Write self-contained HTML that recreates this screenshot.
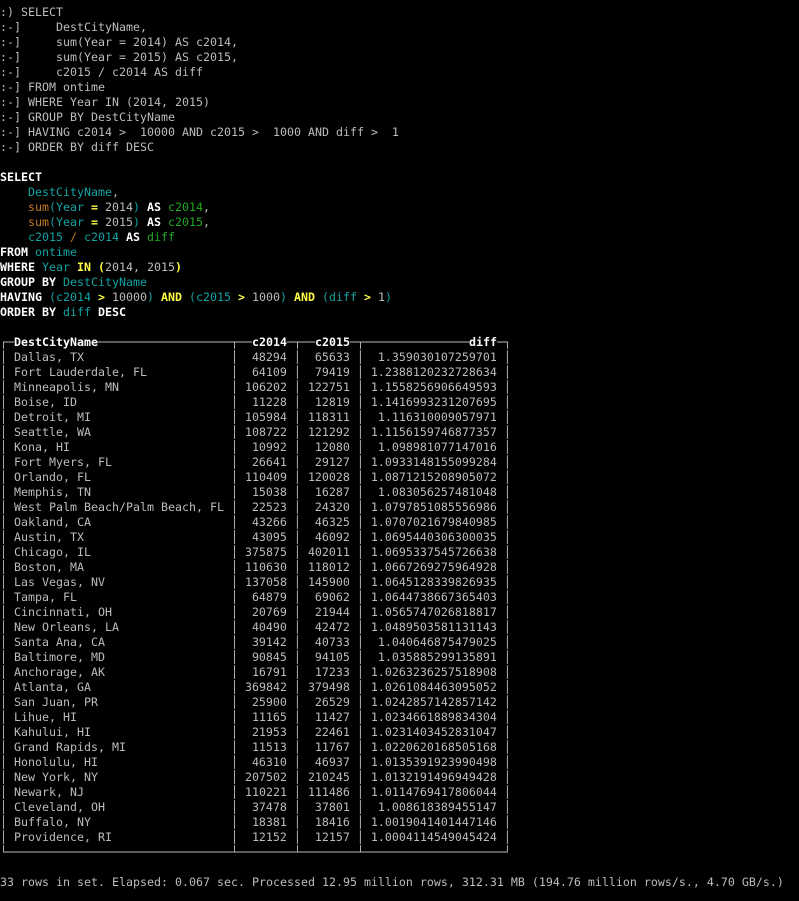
<!DOCTYPE html>
<html><head><meta charset="utf-8"><style>
html,body{margin:0;padding:0;background:#000;width:799px;height:901px;overflow:hidden}
pre{margin:0;padding:5px 0 0 0;font-family:"DejaVu Sans Mono","Liberation Mono",monospace;font-size:11.63px;line-height:15px;color:#bcbcbc;white-space:pre}
b{color:#fff;font-weight:bold}
.c{color:#13a3a3}.o{color:#c27a26}.g{color:#22a822}.y{color:#ffff44;font-weight:bold}
.n{display:inline-block;width:30ch}
.a{display:inline-block;width:6ch;text-align:right}
.d{display:inline-block;width:18ch;text-align:right}
</style></head><body><pre>:) SELECT
:-]     DestCityName,
:-]     sum(Year = 2014) AS c2014,
:-]     sum(Year = 2015) AS c2015,
:-]     c2015 / c2014 AS diff
:-] FROM ontime
:-] WHERE Year IN (2014, 2015)
:-] GROUP BY DestCityName
:-] HAVING c2014 &gt;  10000 AND c2015 &gt;  1000 AND diff &gt;  1
:-] ORDER BY diff DESC

<b>SELECT</b>
    <span class="c">DestCityName</span>,
    <span class="o">sum</span><span class="c">(Year</span> <span class="y">=</span> 2014<span class="c">)</span> <b>AS</b> <span class="g">c2014</span>,
    <span class="o">sum</span><span class="c">(Year</span> <span class="y">=</span> 2015<span class="c">)</span> <b>AS</b> <span class="g">c2015</span>,
    <span class="c">c2015</span> <span class="o">/</span> <span class="c">c2014</span> <b>AS</b> <span class="g">diff</span>
<b>FROM</b> <span class="c">ontime</span>
<b>WHERE</b> <span class="c">Year</span> <span class="y">IN</span> <span class="y">(</span>2014, 2015<span class="y">)</span>
<b>GROUP BY</b> <span class="c">DestCityName</span>
<b>HAVING</b> <span class="c">(c2014</span> <span class="y">&gt;</span> 10000<span class="c">)</span> <span class="y">AND</span> <span class="c">(c2015</span> <span class="y">&gt;</span> 1000<span class="c">)</span> <span class="y">AND</span> <span class="c">(diff</span> <span class="y">&gt;</span> 1<span class="c">)</span>
<b>ORDER BY</b> <span class="c">diff</span> <b>DESC</b>

┌─<b>DestCityName</b>───────────────────┬──<b>c2014</b>─┬──<b>c2015</b>─┬───────────────<b>diff</b>─┐
│ <span class="n">Dallas, TX</span> │ <span class="a">48294</span> │ <span class="a">65633</span> │ <span class="d">1.359030107259701</span> │
│ <span class="n">Fort Lauderdale, FL</span> │ <span class="a">64109</span> │ <span class="a">79419</span> │ <span class="d">1.2388120232728634</span> │
│ <span class="n">Minneapolis, MN</span> │ <span class="a">106202</span> │ <span class="a">122751</span> │ <span class="d">1.1558256906649593</span> │
│ <span class="n">Boise, ID</span> │ <span class="a">11228</span> │ <span class="a">12819</span> │ <span class="d">1.1416993231207695</span> │
│ <span class="n">Detroit, MI</span> │ <span class="a">105984</span> │ <span class="a">118311</span> │ <span class="d">1.116310009057971</span> │
│ <span class="n">Seattle, WA</span> │ <span class="a">108722</span> │ <span class="a">121292</span> │ <span class="d">1.1156159746877357</span> │
│ <span class="n">Kona, HI</span> │ <span class="a">10992</span> │ <span class="a">12080</span> │ <span class="d">1.098981077147016</span> │
│ <span class="n">Fort Myers, FL</span> │ <span class="a">26641</span> │ <span class="a">29127</span> │ <span class="d">1.0933148155099284</span> │
│ <span class="n">Orlando, FL</span> │ <span class="a">110409</span> │ <span class="a">120028</span> │ <span class="d">1.0871215208905072</span> │
│ <span class="n">Memphis, TN</span> │ <span class="a">15038</span> │ <span class="a">16287</span> │ <span class="d">1.083056257481048</span> │
│ <span class="n">West Palm Beach/Palm Beach, FL</span> │ <span class="a">22523</span> │ <span class="a">24320</span> │ <span class="d">1.0797851085556986</span> │
│ <span class="n">Oakland, CA</span> │ <span class="a">43266</span> │ <span class="a">46325</span> │ <span class="d">1.0707021679840985</span> │
│ <span class="n">Austin, TX</span> │ <span class="a">43095</span> │ <span class="a">46092</span> │ <span class="d">1.0695440306300035</span> │
│ <span class="n">Chicago, IL</span> │ <span class="a">375875</span> │ <span class="a">402011</span> │ <span class="d">1.0695337545726638</span> │
│ <span class="n">Boston, MA</span> │ <span class="a">110630</span> │ <span class="a">118012</span> │ <span class="d">1.0667269275964928</span> │
│ <span class="n">Las Vegas, NV</span> │ <span class="a">137058</span> │ <span class="a">145900</span> │ <span class="d">1.0645128339826935</span> │
│ <span class="n">Tampa, FL</span> │ <span class="a">64879</span> │ <span class="a">69062</span> │ <span class="d">1.0644738667365403</span> │
│ <span class="n">Cincinnati, OH</span> │ <span class="a">20769</span> │ <span class="a">21944</span> │ <span class="d">1.0565747026818817</span> │
│ <span class="n">New Orleans, LA</span> │ <span class="a">40490</span> │ <span class="a">42472</span> │ <span class="d">1.0489503581131143</span> │
│ <span class="n">Santa Ana, CA</span> │ <span class="a">39142</span> │ <span class="a">40733</span> │ <span class="d">1.040646875479025</span> │
│ <span class="n">Baltimore, MD</span> │ <span class="a">90845</span> │ <span class="a">94105</span> │ <span class="d">1.035885299135891</span> │
│ <span class="n">Anchorage, AK</span> │ <span class="a">16791</span> │ <span class="a">17233</span> │ <span class="d">1.0263236257518908</span> │
│ <span class="n">Atlanta, GA</span> │ <span class="a">369842</span> │ <span class="a">379498</span> │ <span class="d">1.0261084463095052</span> │
│ <span class="n">San Juan, PR</span> │ <span class="a">25900</span> │ <span class="a">26529</span> │ <span class="d">1.0242857142857142</span> │
│ <span class="n">Lihue, HI</span> │ <span class="a">11165</span> │ <span class="a">11427</span> │ <span class="d">1.0234661889834304</span> │
│ <span class="n">Kahului, HI</span> │ <span class="a">21953</span> │ <span class="a">22461</span> │ <span class="d">1.0231403452831047</span> │
│ <span class="n">Grand Rapids, MI</span> │ <span class="a">11513</span> │ <span class="a">11767</span> │ <span class="d">1.0220620168505168</span> │
│ <span class="n">Honolulu, HI</span> │ <span class="a">46310</span> │ <span class="a">46937</span> │ <span class="d">1.0135391923990498</span> │
│ <span class="n">New York, NY</span> │ <span class="a">207502</span> │ <span class="a">210245</span> │ <span class="d">1.0132191496949428</span> │
│ <span class="n">Newark, NJ</span> │ <span class="a">110221</span> │ <span class="a">111486</span> │ <span class="d">1.0114769417806044</span> │
│ <span class="n">Cleveland, OH</span> │ <span class="a">37478</span> │ <span class="a">37801</span> │ <span class="d">1.008618389455147</span> │
│ <span class="n">Buffalo, NY</span> │ <span class="a">18381</span> │ <span class="a">18416</span> │ <span class="d">1.0019041401447146</span> │
│ <span class="n">Providence, RI</span> │ <span class="a">12152</span> │ <span class="a">12157</span> │ <span class="d">1.0004114549045424</span> │
└────────────────────────────────┴────────┴────────┴────────────────────┘

33 rows in set. Elapsed: 0.067 sec. Processed 12.95 million rows, 312.31 MB (194.76 million rows/s., 4.70 GB/s.)
</pre></body></html>
